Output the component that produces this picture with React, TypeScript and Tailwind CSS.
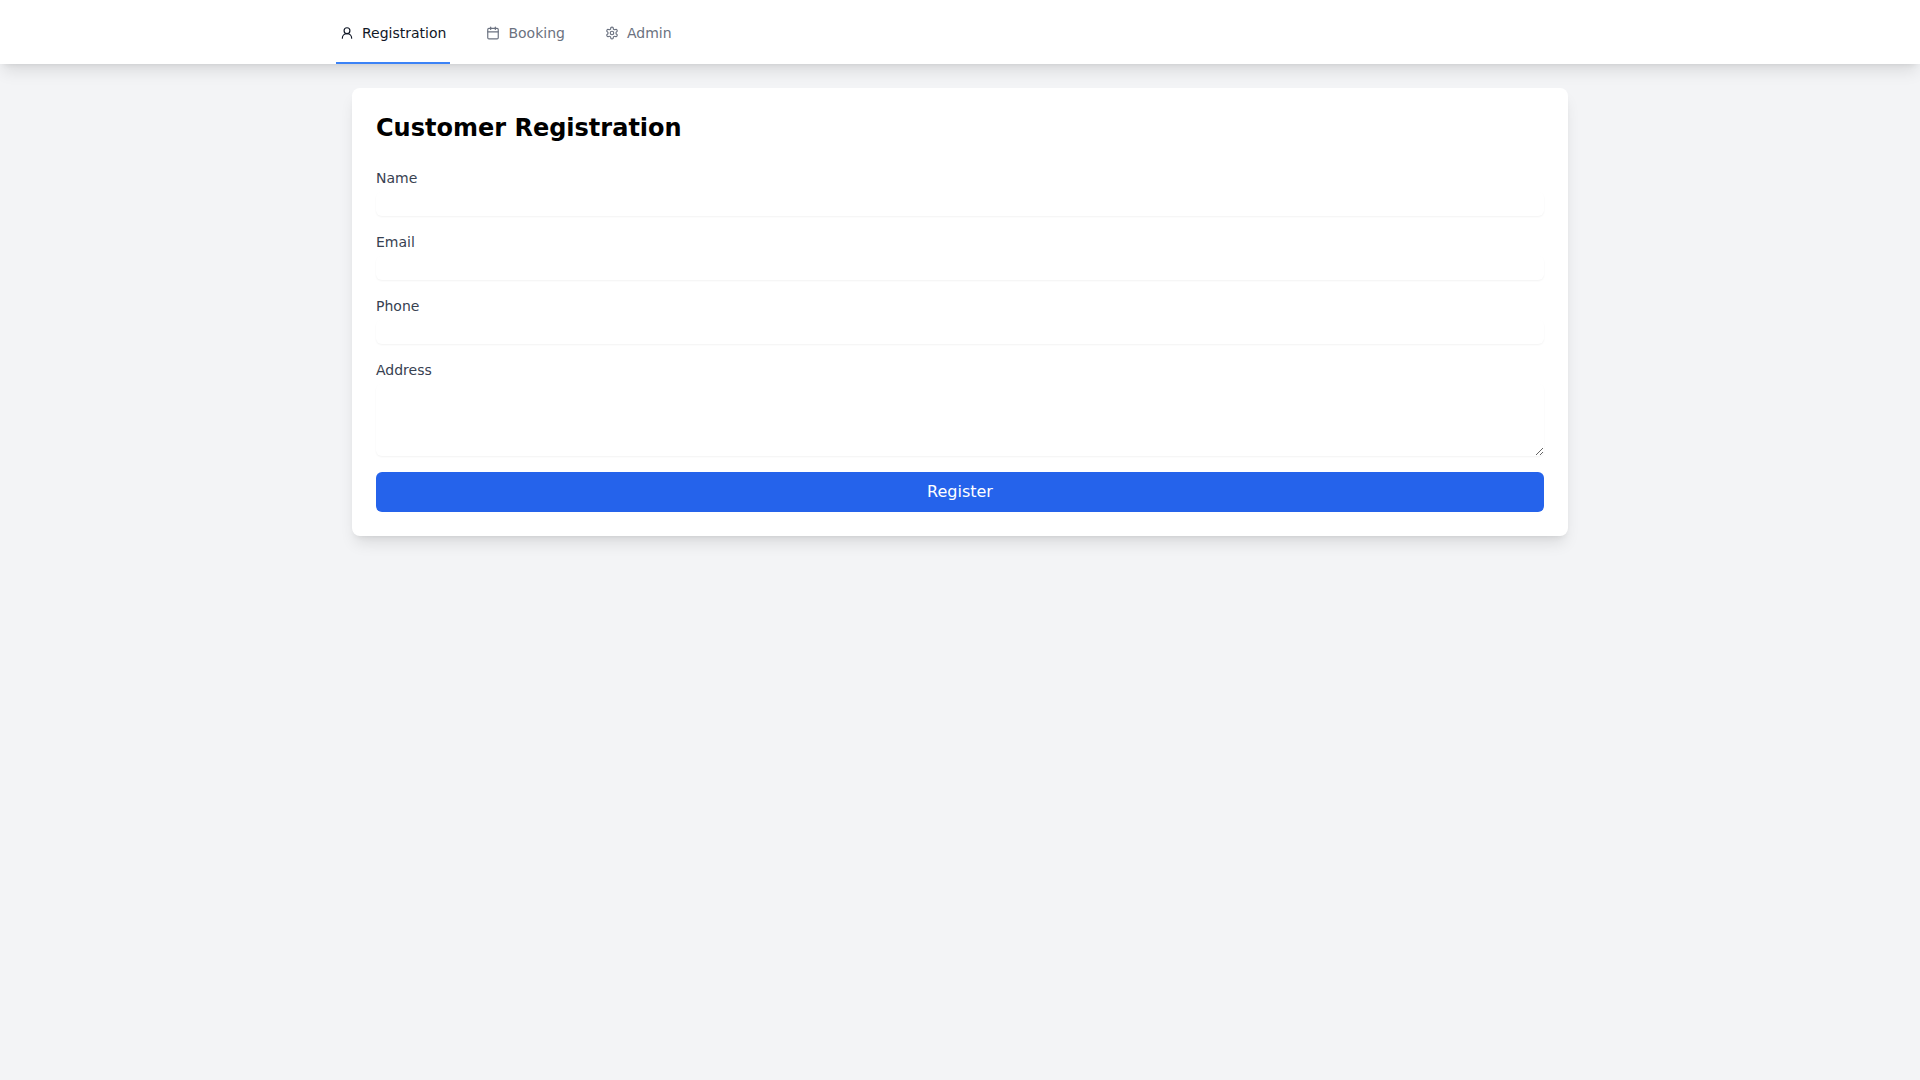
import { Calendar, UserRound } from 'lucide-react';

// gear outline with the rounder teeth seen in the reference
function GearIcon({ className }: { className?: string }) {
  return (
    <svg
      className={className}
      viewBox="0 0 24 24"
      fill="none"
      stroke="currentColor"
      strokeWidth="2"
      strokeLinecap="round"
      strokeLinejoin="round"
    >
      <path d="M12.22 2h-.44a2 2 0 0 0-2 2v.18a2 2 0 0 1-1 1.73l-.43.25a2 2 0 0 1-2 0l-.15-.08a2 2 0 0 0-2.73.73l-.22.38a2 2 0 0 0 .73 2.73l.15.1a2 2 0 0 1 1 1.72v.51a2 2 0 0 1-1 1.74l-.15.09a2 2 0 0 0-.73 2.73l.22.38a2 2 0 0 0 2.73.73l.15-.08a2 2 0 0 1 2 0l.43.25a2 2 0 0 1 1 1.73V20a2 2 0 0 0 2 2h.44a2 2 0 0 0 2-2v-.18a2 2 0 0 1 1-1.73l.43-.25a2 2 0 0 1 2 0l.15.08a2 2 0 0 0 2.73-.73l.22-.39a2 2 0 0 0-.73-2.73l-.15-.08a2 2 0 0 1-1-1.74v-.5a2 2 0 0 1 1-1.74l.15-.09a2 2 0 0 0 .73-2.73l-.22-.38a2 2 0 0 0-2.73-.73l-.15.08a2 2 0 0 1-2 0l-.43-.25a2 2 0 0 1-1-1.73V4a2 2 0 0 0-2-2z" />
      <circle cx="12" cy="12" r="3" />
    </svg>
  );
}

const tabs = [
  { label: 'Registration', icon: UserRound, active: true },
  { label: 'Booking', icon: Calendar, active: false },
  { label: 'Admin', icon: GearIcon, active: false },
];

const fields = [
  { label: 'Name', type: 'text' },
  { label: 'Email', type: 'email' },
  { label: 'Phone', type: 'tel' },
];

export default function App() {
  return (
    <div className="min-h-screen bg-[#f3f4f6] font-['DejaVu_Sans',sans-serif]">
      {/* Top nav */}
      <nav className="bg-white shadow-lg">
        <div className="mx-auto max-w-7xl px-4">
          <div className="flex h-16 gap-8">
            {tabs.map(({ label, icon: Icon, active }) => (
              <button
                key={label}
                className={
                  active
                    ? 'flex items-center gap-2 border-b-2 border-[#3b82f6] px-1 pt-1 text-sm text-[#111827]'
                    : 'flex items-center gap-2 border-b-2 border-transparent px-1 pt-1 text-sm text-[#6b7280]'
                }
              >
                <Icon className="h-3.5 w-3.5" />
                {label}
              </button>
            ))}
          </div>
        </div>
      </nav>

      <main className="mx-auto max-w-7xl px-8 py-6">
        <div className="rounded-lg bg-white p-6 shadow-lg">
          <h2 className="mb-6 text-2xl font-bold text-black">Customer Registration</h2>
          <form className="flex flex-col gap-4">
            {fields.map((f) => (
              <div key={f.label}>
                <label className="block text-sm text-[#374151]">{f.label}</label>
                <input type={f.type} className="mt-1 block h-6 w-full rounded-md shadow-xs outline-none" />
              </div>
            ))}
            <div>
              <label className="block text-sm text-[#374151]">Address</label>
              <textarea rows={3} className="mt-1 block h-[72px] w-full rounded-md shadow-xs outline-none" />
            </div>
            <button type="button" className="h-10 w-full rounded-md bg-[#2563eb] text-white">
              Register
            </button>
          </form>
        </div>
      </main>
    </div>
  );
}
